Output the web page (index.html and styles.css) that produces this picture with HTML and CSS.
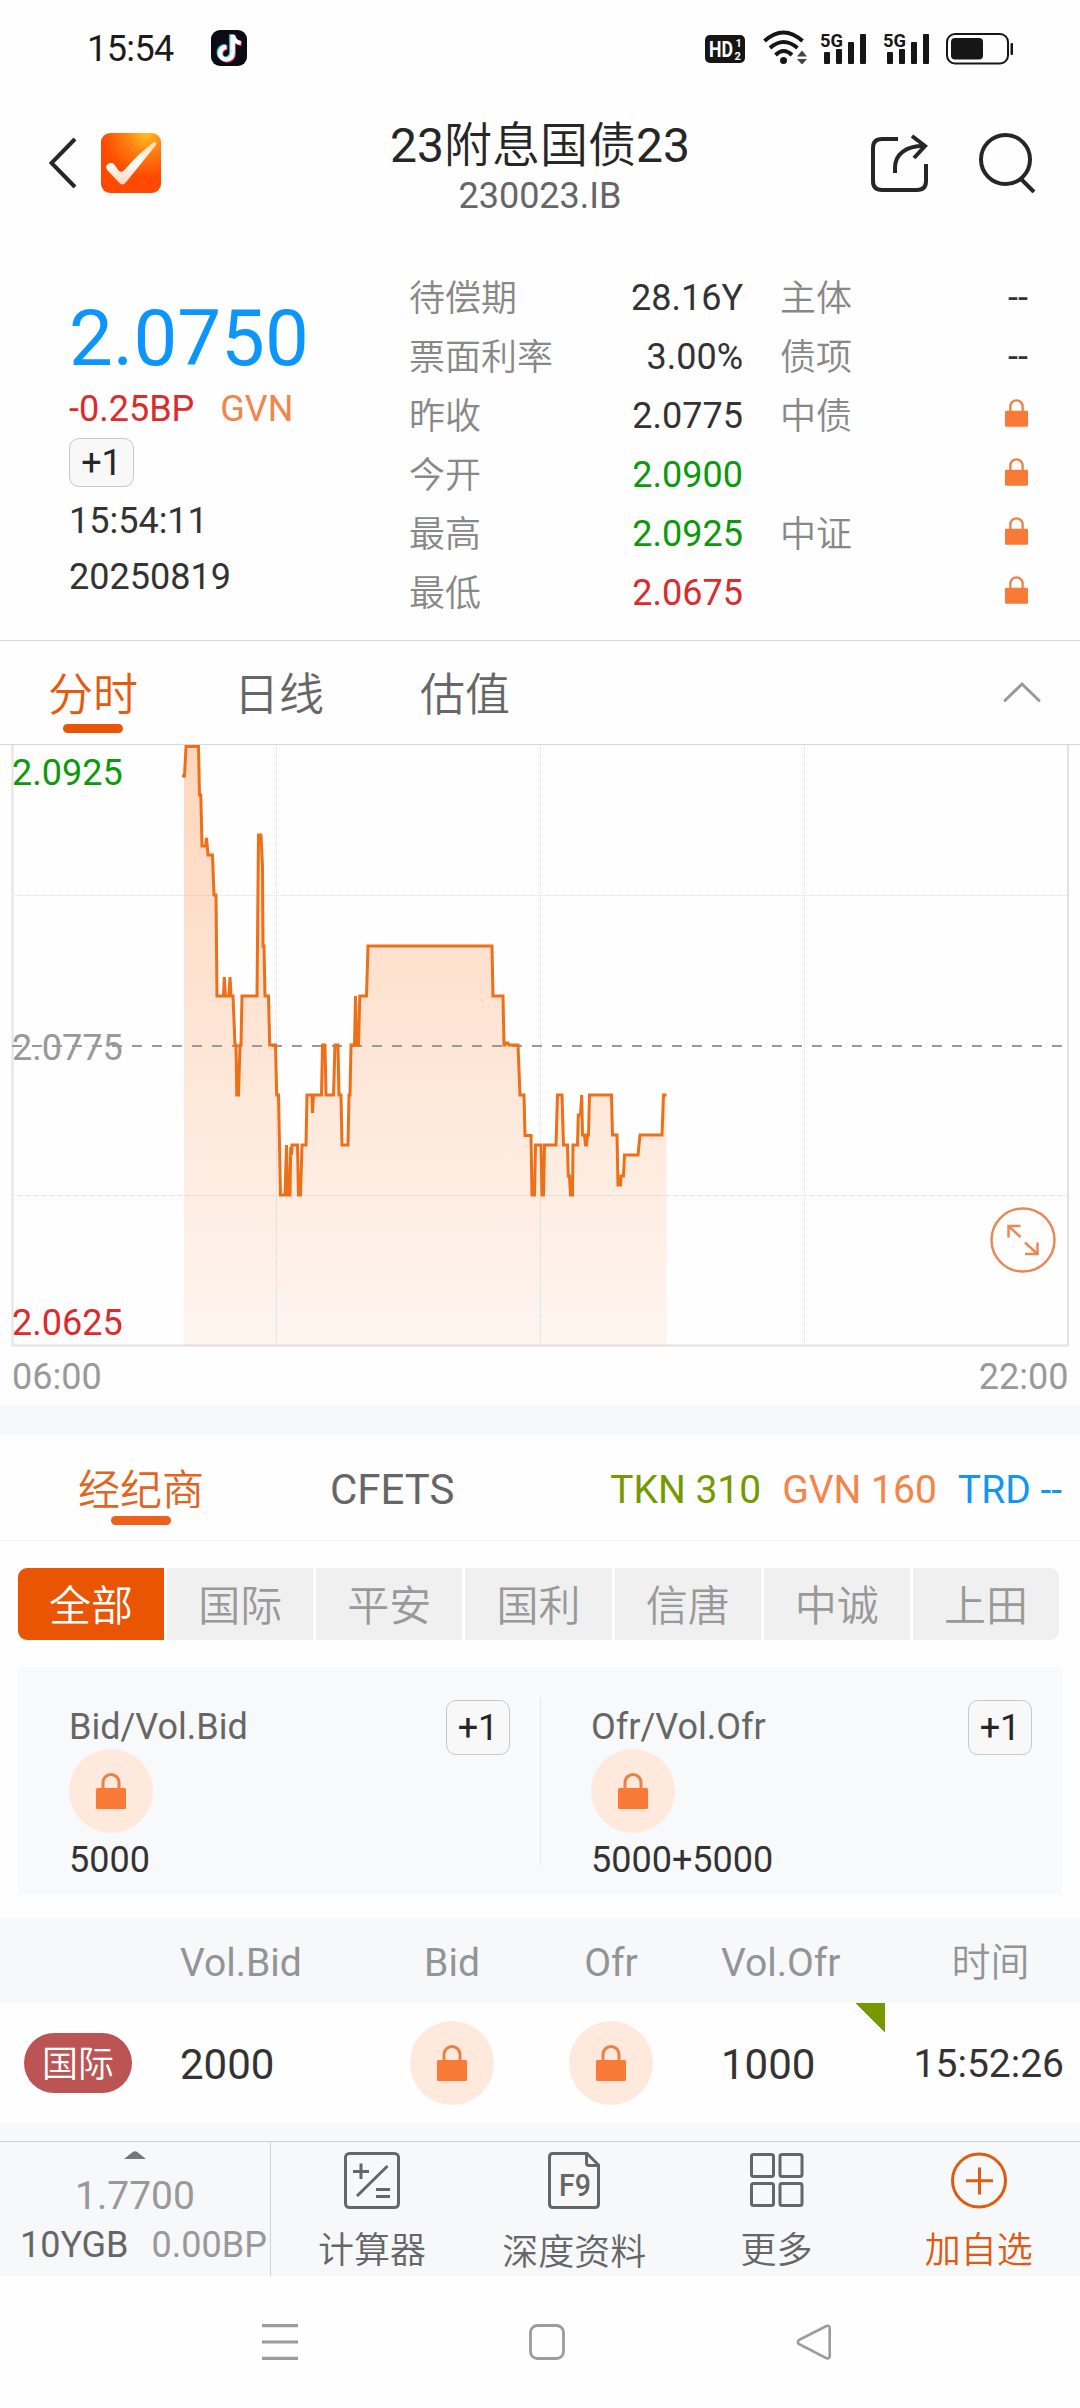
FILE: index.html
```html
<!DOCTYPE html>
<html lang="zh-CN">
<head>
<meta charset="utf-8">
<title>23附息国债23</title>
<link rel="stylesheet" href="styles.css">
</head>
<body>
<svg class="defs" width="0" height="0">
  <symbol id="lock" viewBox="0 0 30 36">
    <path d="M7 17V9.500a8 8 0 0 1 16 0V17" fill="none" stroke="#ea8046" stroke-width="3"/>
    <rect x="0" y="15" width="30" height="21" rx="1.500" fill="#f87a36"/>
  </symbol>
  <symbol id="bars" viewBox="0 0 47 33">
    <rect x="4" y="21" width="6" height="12" rx="1"/><rect x="16" y="18" width="6" height="15" rx="1"/>
    <rect x="28" y="11" width="6" height="22" rx="1"/><rect x="40" y="3" width="6" height="30" rx="1"/>
  </symbol>
</svg>

<div class="status">
  <span class="clock">15:54</span>
  <svg class="note" width="36" height="36" viewBox="0 0 36 36">
    <rect width="36" height="36" rx="9" fill="#0b0b16"/>
    <g fill="none" stroke-width="4.500">
      <path d="M15.500 17a6.300 6.300 0 1 0 6.200 6.300V5" stroke="#27e8e8" transform="translate(-1.200 -.8)"/>
      <path d="M15.500 17a6.300 6.300 0 1 0 6.200 6.300V5c.5 4 3.500 7.500 8 8" stroke="#fb2c55" transform="translate(1 .8)"/>
      <path d="M15.500 17a6.300 6.300 0 1 0 6.200 6.300V5c.5 4 3.500 7.500 8 8" stroke="#fff"/>
    </g>
  </svg>
  <div class="sys">
    <svg width="40" height="28" viewBox="0 0 40 28">
      <rect width="40" height="28" rx="5"/>
      <text x="4" y="22" class="hd" textLength="24" lengthAdjust="spacingAndGlyphs">HD</text>
      <text x="30.500" y="12" class="hd-s">1</text><text x="29.500" y="25" class="hd-s">2</text>
    </svg>
    <svg class="wifi" width="45" height="34" viewBox="0 0 45 34">
      <g fill="none" stroke="#161616" stroke-width="4"><path d="M1.500 11Q20.500-6 39.500 11"/><path d="M7 18Q20.500 6 34.500 18"/><path d="M12.500 25Q20.500 17 29 25"/></g>
      <circle cx="20.500" cy="30.500" r="3.500"/>
      <path d="M39 20.500l5 6H34zM39 34.500l5-5.500H34z" fill="#444"/>
    </svg>
    <svg class="sig" width="47" height="33" viewBox="0 0 47 33"><use href="#bars"/><text x="0" y="15.500" class="sig-text" textLength="23" lengthAdjust="spacingAndGlyphs">5G</text></svg>
    <svg class="sig2" width="47" height="33" viewBox="0 0 47 33"><use href="#bars"/><text x="0" y="15.500" class="sig-text" textLength="23" lengthAdjust="spacingAndGlyphs">5G</text></svg>
    <svg class="batt" width="68" height="32" viewBox="0 0 68 32">
      <rect x="1" y="1" width="61" height="29.500" rx="8" fill="none" stroke="#161616" stroke-width="2"/>
      <rect x="5" y="5" width="32" height="21.500" rx="4"/>
      <rect x="64.500" y="10" width="2.500" height="12" rx="1"/>
    </svg>
  </div>
</div>

<header class="head">
  <div class="head-l">
    <svg width="28" height="52" viewBox="0 0 28 52"><path d="M26 2L2.500 26 26 50" fill="none" stroke="#262626" stroke-width="4"/></svg>
    <svg class="logo" width="60" height="60" viewBox="0 0 60 60">
      <defs>
        <radialGradient id="lg" cx=".75" cy="0" r=".75"><stop offset="0" stop-color="#ffc020"/><stop offset=".5" stop-color="#ff7a10"/><stop offset="1" stop-color="#ff4800"/></radialGradient>
        <linearGradient id="ck" x1="0" y1="0" x2="0" y2="1"><stop offset="0" stop-color="#ffd9a8"/><stop offset=".5" stop-color="#fff"/><stop offset="1" stop-color="#ffd5c0"/></linearGradient>
      </defs>
      <rect width="60" height="60" rx="9" fill="url(#lg)"/>
      <path d="M5 34q1-4 5.500-4 2.500 0 4 3l3 4.500q2.500 2.500 5.500 0Q38 20 53 9q3-1 2 3L26 48q-4 6-8 1.500L7 38q-1.500-2-2-4z" fill="url(#ck)"/>
    </svg>
  </div>
  <div class="title">
    <h1>23<span class="cn">附息国债</span>23</h1>
    <p>230023.IB</p>
  </div>
  <div class="head-r">
    <svg width="58" height="58" viewBox="0 0 58 58"><g fill="none" stroke="#262626" stroke-width="4"><path d="M27 5H11Q2 5 2 14V47Q2 56 11 56H46Q55 56 55 47V30"/><path d="M24 39V34C24 20 35 11.500 54 12"/><path d="M41 2L54 12 43 24"/></g></svg>
    <svg width="58" height="60" viewBox="0 0 58 60"><circle cx="26.500" cy="26.500" r="24.500" fill="none" stroke="#262626" stroke-width="4"/><path d="M42 46L55 59" stroke="#262626" stroke-width="4"/></svg>
  </div>
</header>

<section class="quote">
  <div class="q-left">
    <div class="price">2.0750</div>
    <div class="change"><span class="red">-0.25BP</span><span class="orange">GVN</span></div>
    <div class="plus">+1</div>
    <div class="when">15:54:11</div>
    <div class="when">20250819</div>
  </div>
  <div class="q-grid">
    <span class="lab">待偿期</span><span class="val">28.16Y</span><span class="lab">主体</span><span class="val">--</span>
    <span class="lab">票面利率</span><span class="val">3.00%</span><span class="lab">债项</span><span class="val">--</span>
    <span class="lab">昨收</span><span class="val">2.0775</span><span class="lab">中债</span><svg class="lk"><use href="#lock"/></svg>
    <span class="lab">今开</span><span class="val green">2.0900</span><span class="lab"></span><svg class="lk"><use href="#lock"/></svg>
    <span class="lab">最高</span><span class="val green">2.0925</span><span class="lab">中证</span><svg class="lk"><use href="#lock"/></svg>
    <span class="lab">最低</span><span class="val red">2.0675</span><span class="lab"></span><svg class="lk"><use href="#lock"/></svg>
  </div>
</section>

<nav class="tabs">
  <div class="tab on">分时</div><div class="tab">日线</div><div class="tab">估值</div>
  <svg class="fold" width="38" height="22" viewBox="0 0 38 22"><path d="M2 19.500L19 3 36 19.500" fill="none" stroke="#999" stroke-width="3" stroke-linecap="round"/></svg>
</nav>

<svg class="chart" width="1080" height="660" viewBox="0 745 1080 660">
  <defs><linearGradient id="area" gradientUnits="userSpaceOnUse" x1="0" y1="745" x2="0" y2="1346"><stop offset="0" stop-color="#ff6a0c" stop-opacity=".27"/><stop offset="1" stop-color="#ff6a0c" stop-opacity=".06"/></linearGradient></defs>
  <g fill="none" stroke="#dedede" stroke-width="1" stroke-dasharray="1 1">
    <path d="M12 895.500H1068M12 1195.500H1068M276.500 745V1345M540.500 745V1345M804.500 745V1345"/>
  </g>
  <path d="M12.500 745V1345.500H1068V745" fill="none" stroke="#e2e2e4" stroke-width="2"/>
  <path fill="url(#area)" d="M184 1346V776L186 746H198.500L199.500 795H200.800L202 846H205.500L206.500 838 208 855H212.500L214 895H216L217 996H233L235 1045H236L236.800 1095H238.500L240 1045H241L242 996H257L258.500 835H261L263 946H264L265 996H268.500L269.700 1045H275.500L276.700 1095H278.500L280.500 1195H285L286.500 1145 288 1195H290L292 1145H297.500L298.500 1195H300.500L302 1145H306L307 1095H321.500L322.500 1045H325L326 1095H333.500L335 1045H338L339 1095H341L342 1145H348L349 1095H350L351 1045H354.500L355.500 996 356.500 1045H358.500L359.800 996H366.500L368 946H492L493 996H503L504 1045H518L520 1095H524L525 1135.500H531L532 1195H534.500L535.500 1145H541L542 1195H543.500L544.500 1145H556L557.500 1095H562L563.500 1145H567.500L568.300 1176H569.500L570.500 1195H572.500L573 1145H577.500L578.300 1115H580.500L581.700 1095 582.500 1135H584.500L585.500 1145H586.500L587.500 1135H588.500L589.500 1095H611.500L612.500 1135H617L618 1185H620.500L621 1176H623.500L624.500 1155H638L640 1135H662L663.500 1095H666.500V1346Z"/>
  <path d="M12 1046H1063" fill="none" stroke="#999" stroke-width="2" stroke-dasharray="10 10"/>
  <path fill="none" stroke="#ed6f17" stroke-width="3" stroke-linejoin="miter" stroke-miterlimit="2" d="M182 776H184.500L186 746.500H198.500L199.500 795H200.800L202 846H205.500L206.500 838 208 855H212.500L214 895H216L217 996H223.500L224.300 977 225.500 996H229L230 977 231 996H233L235 1045H236L236.800 1095H238.500L240 1045H241L242 996H257L258.500 835H261L262.500 867 263 946H264L265 996H268.500L269.700 1045H275.500L276.700 1095H278.500L280.500 1195H285L286.500 1145 288 1195H290L290.700 1147 291.500 1155 292 1145H297.500L298.500 1195H300.500L302 1145H306L307 1095H312L312.500 1113 313.500 1095H321.500L322.500 1045H325L326 1095H333.500L335 1045H338L339 1095H341L342 1145H348L349 1095H350L351 1045H354.500L355.500 996 356.500 1045H358.500L359.800 996H366.500L368 946H492L493 996H503L504 1045H505L506 1043H508L509 1045H518L520 1095H524L525 1135.500H531L532 1195H534.500L535.500 1145H541L542 1195H543.500L544.500 1145H556L557.500 1095H562L563.500 1145H567.500L568.300 1176H569.500L570.500 1195H572.500L573 1145H577.500L578.300 1115H580.500L581.700 1095 582.500 1135H584.500L585.500 1145H586.500L587.500 1135H588.500L589.500 1095H611.500L612.500 1135H617L618 1185H620.500L621 1176H623.500L624.500 1155H638L640 1135H662L663.500 1095H666.500"/>
  <g class="axis">
    <text x="12" y="785" fill="#0c9a0c">2.0925</text>
    <text x="12" y="1060" fill="#999">2.0775</text>
    <text x="12" y="1335" fill="#dc2b2b">2.0625</text>
    <text x="12" y="1389" fill="#999">06:00</text>
    <text x="1068.500" y="1389" fill="#999" text-anchor="end">22:00</text>
  </g>
  <g fill="none" stroke="#e88a55" stroke-width="2.500">
    <circle cx="1023" cy="1240" r="31.500"/>
    <path d="M1008.500 1237.500V1226H1020.500M1008.500 1226L1020.500 1237M1025 1254H1037.500V1242.500M1037.500 1254L1025 1242.500"/>
  </g>
</svg>

<div class="band"></div>

<section class="broker">
  <div class="b-tab on">经纪商</div>
  <div class="b-tab b2">CFETS</div>
  <div class="stats"><span class="olive">TKN 310</span><span class="orange">GVN 160</span><span class="blue">TRD --</span></div>
</section>

<div class="seg">
  <span class="on">全部</span><span>国际</span><span>平安</span><span>国利</span><span>信唐</span><span>中诚</span><span>上田</span>
</div>

<section class="card">
  <div class="side">
    <div class="side-l"><div class="s-lab">Bid/Vol.Bid</div><div class="disc"><svg class="lk2"><use href="#lock"/></svg></div><div class="s-val">5000</div></div>
    <div class="plus tall">+1</div>
  </div>
  <div class="side">
    <div class="side-l"><div class="s-lab">Ofr/Vol.Ofr</div><div class="disc"><svg class="lk2"><use href="#lock"/></svg></div><div class="s-val">5000+5000</div></div>
    <div class="plus tall">+1</div>
  </div>
</section>

<div class="row thead"><span></span><span>Vol.Bid</span><span class="mid">Bid</span><span class="mid">Ofr</span><span>Vol.Ofr</span><span class="mid cn">时间</span></div>
<div class="row trow">
  <span><i class="pill">国际</i></span><span>2000</span>
  <span class="mid"><i class="disc"><svg class="lk2"><use href="#lock"/></svg></i></span>
  <span class="mid"><i class="disc"><svg class="lk2"><use href="#lock"/></svg></i></span>
  <span class="vol">1000</span><span class="time">15:52:26</span>
</div>

<footer class="bar">
  <div class="bench">
    <svg width="22" height="8" viewBox="0 0 22 8"><path d="M0 8L9 .8Q11-.5 13 .8L22 8z" fill="#777"/></svg>
    <div class="b-price">1.7700</div>
    <div class="b-row"><span>10YGB</span><span class="gray">0.00BP</span></div>
  </div>
  <div class="act">
    <svg width="56" height="58" viewBox="0 0 56 58"><g fill="none" stroke="#666" stroke-width="3"><rect x="1.500" y="2.500" width="53" height="54" rx="4"/><path d="M9 20.500H25M17 12.500V28M13 45L43.500 15M32 38.500H46M32 45.500H46"/></g></svg>
    <span>计算器</span>
  </div>
  <div class="act deep">
    <svg width="52" height="58" viewBox="0 0 52 58"><path d="M5 2.500H39L50.500 14V53Q50.500 56.500 47 56.500H5Q1.500 56.500 1.500 53V6Q1.500 2.500 5 2.500ZM38.500 3V12Q38.500 14.500 41 14.500H50" fill="none" stroke="#666" stroke-width="3"/><text x="11" y="45" class="f9" textLength="32" lengthAdjust="spacingAndGlyphs">F9</text></svg>
    <span>深度资料</span>
  </div>
  <div class="act">
    <svg width="54" height="58" viewBox="0 0 54 58"><g fill="none" stroke="#666" stroke-width="3"><rect x="1.500" y="3.500" width="22" height="22" rx="2"/><rect x="30" y="3.500" width="22" height="22" rx="2"/><rect x="1.500" y="32.500" width="22" height="22" rx="2"/><rect x="30" y="32.500" width="22" height="22" rx="2"/></g></svg>
    <span>更多</span>
  </div>
  <div class="act add">
    <svg width="56" height="58" viewBox="0 0 56 58"><g fill="none" stroke="#de5b12" stroke-width="3"><circle cx="28" cy="29.500" r="26.500"/><path d="M15 29.800H42M28.500 16.500V43.500"/></g></svg>
    <span>加自选</span>
  </div>
</footer>

<div class="sysnav">
  <svg width="36" height="36" viewBox="0 0 36 36"><path d="M0 1.700H36M0 18H36M0 34.300H36" stroke="#9c9c9c" stroke-width="3.200"/></svg>
  <svg width="36" height="36" viewBox="0 0 36 36"><rect x="1.500" y="1.500" width="33" height="33" rx="7" fill="none" stroke="#9c9c9c" stroke-width="2.800"/></svg>
  <svg width="36" height="36" viewBox="0 0 36 36"><path d="M30.500 2L2.800 16Q1 18 2.800 20L30.500 34.200Q33.700 35 33.700 32V4Q33.700 1 30.500 2Z" fill="none" stroke="#9c9c9c" stroke-width="2.600"/></svg>
</div>
</body>
</html>
```
FILE: styles.css
```css
* { box-sizing: border-box; margin: 0; padding: 0; }
body { width: 1080px; background: #fefefe; color: #333; font: 36px/1 Roboto, "Noto Sans CJK SC", sans-serif; }
svg { display: block; flex: none; }
i { font-style: normal; }
.defs { position: absolute; }

.cn, .lab, .tab, .seg, .pill, .act span { font-family: Roboto, "Noto Sans CJK SC", sans-serif; font-weight: 350; }
.red { color: #dc2b2b; }
.green { color: #0c9a0c; }
.orange { color: #f58449; }
.olive { color: #759a00; }
.blue { color: #1296f2; }

.status { display: flex; height: 96px; padding: 30px 66px 0 87px; fill: #161616; color: #1c1c1c; }
.clock { width: 124px; font-size: 36px; line-height: 38px; letter-spacing: -.6px; }
.sys { display: flex; margin: 0 0 0 auto; }
.sys svg:first-child { margin-top: 5px; }
.wifi { margin-left: 18px; }
.sig { margin: 1px 0 0 12px; }
.sig2 { margin: 1px 0 0 16px; }
.batt { margin: 3px 0 0 16px; }
.sig-text { font: 700 19px Roboto, sans-serif; }
.hd { font: 700 22px Roboto, sans-serif; fill: #fff; }
.hd-s { font: 700 11px Roboto, sans-serif; fill: #fff; }

.head { display: grid; grid-template-columns: 1fr auto 1fr; align-items: center; height: 134px; padding: 0 43px 0 49px; }
.head-l { display: flex; align-items: center; gap: 24px; }
.head-r { display: flex; align-items: center; justify-content: flex-end; gap: 50px; }
.title { padding: 3px 6px 0 0; text-align: center; }
.title h1 { font-size: 48px; font-weight: 400; line-height: 62px; color: #262626; }
.title p { color: #666; line-height: 38px; }

.quote { display: flex; height: 411px; border-bottom: 1px solid #d6dadb; }
.q-left { width: 409px; padding: 70px 0 0 69px; }
.price { font-size: 78px; line-height: 78px; color: #0c96fb; }
.change { display: flex; gap: 26px; margin-top: 11px; line-height: 40px; }
.plus { width: 65px; height: 49px; margin-top: 9px; border: 1px solid #c8c8c8; border-radius: 10px; background: #f8f8f8; color: #262626; line-height: 49px; text-align: center; }
.when { line-height: 56px; }
.plus + .when { margin-top: 6px; }
.q-grid { display: grid; grid-template-columns: 160px 174px 144px 141px; grid-auto-rows: 59px; padding-top: 38px; line-height: 60px; }
.lab { color: #888; white-space: nowrap; line-height: 63px; }
.lab:nth-child(4n+3) { padding-left: 37px; }
.val { text-align: right; }
.lk { width: 23px; height: 28px; margin: 13px 0 0 auto; }

.tabs { display: flex; height: 104px; padding: 27px 39px 0 48px; gap: 96px; border-bottom: 1px solid #d4dadb; }
.tab { width: 90px; font-size: 45px; line-height: 56px; color: #666; white-space: nowrap; }
.tab.on { color: #e55a0c; }
.tab.on::after, .b-tab.on::after { content: ""; display: block; width: 60px; height: 9px; margin: 0 auto; border-radius: 5px; background: #ea5504; }
.fold { margin: 13px 0 0 auto; }
.axis { font-size: 36px; }

.band { height: 30px; background: #f6f8fa; }

.broker { display: flex; height: 106px; padding-left: 78px; border-bottom: 1px solid #f3f4f5; font-size: 42px; }
.b-tab { padding-top: 29px; line-height: 52px; color: #666; }
.b-tab.on { width: 126px; padding-top: 30px; color: #e2651e; font-weight: 350; }
.b-tab.on::after { margin-top: -1px; background: #ee6118; }
.b2 { margin-left: 126px; }
.stats { display: flex; gap: 21px; margin-left: auto; padding: 29px 18px 0 0; font-size: 39px; line-height: 52px; }

.seg { display: flex; gap: 3px; margin: 27px 21px 27px 18px; height: 72px; border-radius: 9px; overflow: hidden; }
.seg span { flex: 1; background: #f0f0f0; color: #999; font-size: 42px; line-height: 77px; text-align: center; }
.seg .on { background: #ea5504; color: #fff; }

.card { display: flex; height: 228px; margin: 0 18px 24px; background: #f7f9fb; }
.side { display: flex; justify-content: space-between; width: 522px; padding: 33px 30px 0 51px; }
.side + .side { background: linear-gradient(#e6e9ec, #e6e9ec) 0 30px / 1px 168px no-repeat; }
.s-lab { margin-top: 6px; line-height: 42px; color: #666; }
.side .disc { margin-top: 1px; }
.s-val { margin-top: 6px; line-height: 42px; }
.tall { width: 64px; height: 55px; margin: 0; line-height: 55px; }
.disc { display: flex; align-items: center; justify-content: center; width: 84px; height: 84px; border-radius: 50%; background: #ffe9dd; }
.lk2 { width: 30px; height: 36px; }

.row { display: grid; grid-template-columns: 180px 192px 160px 158px 195px 195px; align-items: center; }
.thead { height: 84px; background: #f6f8fa; color: #929496; font-size: 39px; line-height: 88px; }
.row > :nth-child(5) { padding-left: 31px; }
.row > :nth-child(6) { padding-left: 16px; }
.mid { display: flex; justify-content: center; }
.trow { height: 120px; font-size: 42px; background: #fefefe; }
.trow > span { line-height: 123px; height: 120px; align-items: center; }
.trow > :first-child { display: flex; padding-left: 24px; }
.pill { width: 108px; height: 60px; border-radius: 30px; background: #bd5454; color: #fff; font-size: 36px; line-height: 65px; text-align: center; }
.vol { background: linear-gradient(to top right, transparent 50%, #759a00 50%) 100% 0 / 29px 29px no-repeat; }
.trow .time { padding: 0 16px 0 0; text-align: right; font-size: 39px; }

.bar { display: flex; height: 153px; padding-top: 18px; background: #f6f8fa; }
.bench { display: flex; flex-direction: column; align-items: center; width: 271px; height: 135px; padding-top: 9px; border: solid #cdd1da; border-width: 1px 1px 0 0; }
.b-price { margin-top: 14px; font-size: 39px; line-height: 46px; color: #999; }
.b-row { display: flex; gap: 23px; margin-top: 3px; margin-right: -19px; width: 249px; line-height: 46px; color: #666; white-space: nowrap; }
.gray { color: #999; }
.act { flex: 1; display: flex; flex-direction: column; align-items: center; padding-top: 9px; border-top: 1px solid #cdd1da; color: #666; }
.act span { margin-top: 19px; line-height: 46px; }
.deep span { margin-top: 21px; }
.add { color: #de5b12; }
.f9 { font: 500 31px Roboto, sans-serif; fill: #666; }

.sysnav { display: flex; height: 132px; padding: 48px 0 0 262px; gap: 231px; }
```
